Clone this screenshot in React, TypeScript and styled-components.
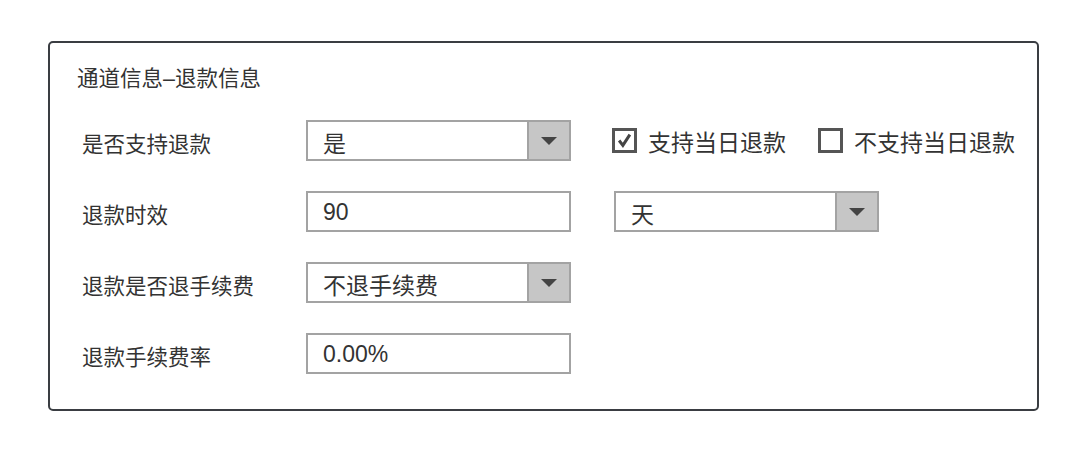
import React from 'react';
import styled, { createGlobalStyle } from 'styled-components';

const GlobalStyle = createGlobalStyle`
    body {
        margin: 0;
        background: #fff;
        font-family: "Liberation Sans", "Noto Sans CJK SC", sans-serif;
        color: #333;
    }
`;

const Card = styled.section`
    box-sizing: border-box;
    width: 991px;
    height: 370px;
    margin: 41px 0 0 48px;
    padding: 23px 0 0 27px;
    border: 2px solid #3a3d42;
    border-radius: 5px;
`;

const Title = styled.div`
    font-size: 21.5px;
    line-height: 26px;
    margin-bottom: 28px;
`;

const Form = styled.div`
    display: flex;
    flex-direction: column;
    gap: 30px;
    padding-left: 5px;
`;

const Row = styled.div`
    display: flex;
    align-items: center;
    height: 41px;
`;

const Label = styled.div`
    flex: none;
    width: 224px;
    padding-top: 4px;
    font-size: 21.5px;
`;

const Field = styled.div`
    box-sizing: border-box;
    display: flex;
    align-items: stretch;
    flex: none;
    width: 265px;
    height: 41px;
    border: 2px solid #a3a3a3;
    background: #fff;
    margin-left: ${(props: { offset?: number }) => props.offset || 0}px;
`;

const Value = styled.div`
    flex: 1;
    display: flex;
    align-items: center;
    padding: 2px 0 0 15px;
    font-size: 23px;
`;

const Arrow = styled.div`
    width: 40px;
    display: flex;
    align-items: center;
    justify-content: center;
    background: #c6c6c6;
    border-left: 2px solid #a3a3a3;

    &::after {
        content: '';
        border-left: 8px solid transparent;
        border-right: 8px solid transparent;
        border-top: 8px solid #444;
    }
`;

const Options = styled.div`
    display: flex;
    align-items: center;
    gap: 32px;
    margin-left: 41px;
`;

const Option = styled.div`
    display: flex;
    align-items: center;
    gap: 11px;
    font-size: 23px;
`;

const Box = styled.div`
    box-sizing: border-box;
    width: 25px;
    height: 25px;
    border: 3px solid #555;
    display: flex;
    align-items: center;
    justify-content: center;
`;

interface SelectProps {
    value: string;
    offset?: number;
}

const Select = ({ value, offset }: SelectProps) => (
    <Field offset={offset}>
        <Value>{value}</Value>
        <Arrow />
    </Field>
);

const Checkbox = ({ checked, label }: { checked: boolean; label: string }) => (
    <Option>
        <Box>
            {checked &&
                <svg width="15" height="15" viewBox="0 0 14 14">
                    <polyline points="2,7 5.5,11.5 12,1.5" fill="none" stroke="#444" strokeWidth="2.8" />
                </svg>
            }
        </Box>
        {label}
    </Option>
);

export default function App() {
    return (
        <>
            <GlobalStyle />
            <Card>
                <Title>通道信息–退款信息</Title>
                <Form>
                    <Row>
                        <Label>是否支持退款</Label>
                        <Select value="是" />
                        <Options>
                            <Checkbox checked label="支持当日退款" />
                            <Checkbox checked={false} label="不支持当日退款" />
                        </Options>
                    </Row>
                    <Row>
                        <Label>退款时效</Label>
                        <Field><Value>90</Value></Field>
                        <Select value="天" offset={43} />
                    </Row>
                    <Row>
                        <Label>退款是否退手续费</Label>
                        <Select value="不退手续费" />
                    </Row>
                    <Row>
                        <Label>退款手续费率</Label>
                        <Field><Value>0.00%</Value></Field>
                    </Row>
                </Form>
            </Card>
        </>
    );
}
